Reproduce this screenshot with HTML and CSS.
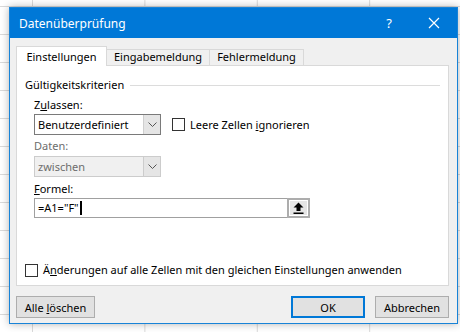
FILE: index.html
```html
<!DOCTYPE html>
<html lang="de">
<head>
  <meta charset="UTF-8">
  <title>Datenüberprüfung</title>
  <link rel="stylesheet" href="styles.css">
</head>
<body>

  <div class="dialog">
    <!-- Titelleiste -->
    <div class="titlebar">
      <span class="title">Datenüberprüfung</span>
      <span class="help">?</span>
      <span class="close">
        <svg width="12" height="12" viewBox="0 0 12 12"><path d="M1 1L11 11M11 1L1 11" stroke="#fff" stroke-width="1.2"/></svg>
      </span>
    </div>

    <div class="content">
      <!-- Register -->
      <div class="tabs">
        <div class="tab active">Einstellungen</div>
        <div class="tab">Eingabemeldung</div>
        <div class="tab">Fehlermeldung</div>
      </div>

      <div class="panel">
        <div class="group-title"><span>Gültigkeitskriterien</span><i class="rule"></i></div>

        <div class="fields">
          <div class="label">Z<u>u</u>lassen:</div>
          <div class="row">
            <div class="select">
              <span class="value">Benutzerdefiniert</span>
              <span class="drop"><svg width="9" height="5" viewBox="0 0 9 5"><path d="M0.5 0.5L4.5 4.5L8.5 0.5" fill="none" stroke="#555"/></svg></span>
            </div>
            <label class="check"><span class="box"></span><span>Leere Zellen <u>i</u>gnorieren</span></label>
          </div>

          <div class="label disabled">Daten:</div>
          <div class="select disabled">
            <span class="value">zwischen</span>
            <span class="drop"><svg width="9" height="5" viewBox="0 0 9 5"><path d="M0.5 0.5L4.5 4.5L8.5 0.5" fill="none" stroke="#555"/></svg></span>
          </div>

          <div class="label"><u>F</u>ormel:</div>
          <div class="formula">
            <span class="value">=A1="F"<i class="caret"></i></span>
            <span class="ref-btn">
              <svg width="11" height="12" viewBox="0 0 11 12"><path d="M5.5 0.5L10.5 5.5H7.5V9H3.5V5.5H0.5Z" fill="#000"/><rect x="0.5" y="10.5" width="10" height="1.5" fill="#000"/></svg>
            </span>
          </div>
        </div>

        <label class="check bottom"><span class="box"></span><span>Ä<u>n</u>derungen auf alle Zellen mit den gleichen Einstellungen anwenden</span></label>
      </div>

      <!-- Schaltflächen -->
      <div class="buttons">
        <button class="btn">Alle <u>l</u>öschen</button>
        <span class="spacer"></span>
        <button class="btn default">OK</button>
        <button class="btn">Abbrechen</button>
      </div>
    </div>
  </div>

</body>
</html>
```

FILE: styles.css
```css
* {
  box-sizing: border-box;
}

body {
  margin: 0;
  padding: 7px 0 0 9px;
  height: 332px;
  overflow: hidden;
  font-family: "Noto Sans", "Liberation Sans", sans-serif;
  font-size: 11px;
  color: #000;
  background-color: #fff;
  background-image:
    linear-gradient(to right, #dadada 1px, transparent 1px),
    linear-gradient(to bottom, #dadada 1px, transparent 1px);
  background-size: 112.4px 28px;
  background-position: 32px 6px;
}

.dialog {
  width: 449px;
  height: 317px;
  border: 1px solid #1883d7;
  background: #f0f0f0;
  box-shadow: 0 0 8px rgba(0, 0, 0, 0.3);
  display: flex;
  flex-direction: column;
}

.titlebar {
  height: 30px;
  background: #0078d7;
  color: #fff;
  display: flex;
  align-items: center;
  padding-left: 9px;
  flex-shrink: 0;
}

.title {
  flex: 1;
  font-size: 12px;
}

.help {
  width: 22px;
  text-align: center;
  font-size: 13px;
  margin-right: 23px;
}

.close {
  width: 22px;
  display: flex;
  justify-content: center;
  margin-right: 12px;
}

.content {
  flex: 1;
  padding: 8px 8px 6px 6px;
  display: flex;
  flex-direction: column;
}

.tabs {
  display: flex;
  align-items: flex-end;
  height: 19px;
  position: relative;
  z-index: 1;
}

.tab {
  height: 16px;
  line-height: 14px;
  text-align: center;
  border: 1px solid #d9d9d9;
  border-bottom: none;
  border-left: none;
  background: #f0f0f0;
}

.tab.active {
  height: 20px;
  line-height: 19px;
  margin-bottom: -1px;
  background: #fff;
  border-left: 1px solid #d9d9d9;
  width: 91px;
}

.tab:nth-child(2) {
  width: 103px;
}

.tab:nth-child(3) {
  width: 94px;
}

.panel {
  height: 221px;
  background: #fff;
  border: 1px solid #d9d9d9;
  padding: 11px 8px 7px 8px;
  display: flex;
  flex-direction: column;
}

.group-title {
  display: flex;
  align-items: center;
  height: 16px;
  line-height: 16px;
}

.rule {
  flex: 1;
  height: 1px;
  background: #dcdcdc;
  margin: 1px 0 0 6px;
}

.fields {
  padding-left: 9px;
}

.label {
  height: 16px;
  line-height: 16px;
  margin-top: 4px;
  margin-bottom: 1px;
}

.label.disabled {
  color: #6d6d6d;
  margin-top: 3px;
  margin-bottom: 0;
}

.fields .label:nth-of-type(3) {
  margin-top: 3px;
  margin-bottom: 2px;
}

.row {
  display: flex;
  align-items: center;
}

.select {
  width: 127px;
  height: 21px;
  border: 1px solid #7a7a7a;
  display: flex;
  background: #fff;
}

.select .value {
  flex: 1;
  line-height: 19px;
  padding-left: 3px;
}

.select .drop {
  width: 17px;
  border-left: 1px solid #cfcfcf;
  background: #e5e5e5;
  display: flex;
  align-items: center;
  justify-content: center;
}

.select.disabled {
  border-color: #cccccc;
  background: #f0f0f0;
  color: #6d6d6d;
}

.select.disabled .drop {
  border-left-color: #cccccc;
}

.check {
  display: flex;
  align-items: center;
  height: 16px;
  line-height: 16px;
}

.row .check {
  margin-left: 11px;
}

.box {
  width: 13px;
  height: 13px;
  border: 1px solid #333;
  background: #fff;
  margin-right: 5px;
}

.check.bottom {
  margin-top: auto;
}

.formula {
  width: 276px;
  height: 20px;
  border: 1px solid #a0a0a0;
  display: flex;
}

.formula .value {
  flex: 1;
  line-height: 18px;
  padding-left: 3px;
  display: flex;
  align-items: center;
}

.caret {
  width: 2px;
  height: 14px;
  background: #000;
  margin-left: 1px;
}

.ref-btn {
  width: 23px;
  margin: -1px -1px -1px 0;
  border: 2px solid #adadad;
  background: #e5e5e5;
  box-shadow: inset 0 0 0 1px #fff;
  display: flex;
  align-items: center;
  justify-content: center;
}

.buttons {
  display: flex;
  margin-top: 10px;
  gap: 10px;
}

.spacer {
  flex: 1;
}

.btn {
  height: 22px;
  width: 74px;
  padding: 0;
  font: inherit;
  color: #000;
  background: #e1e1e1;
  border: 1px solid #adadad;
}

.btn:first-child {
  width: 79px;
}

.btn.default {
  border: 2px solid #0078d7;
}
```
